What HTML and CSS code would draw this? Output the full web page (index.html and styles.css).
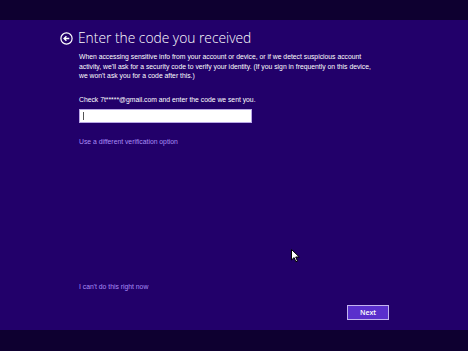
FILE: index.html
```html
<!DOCTYPE html>
<html lang="en">
<head>
    <meta charset="UTF-8">
    <title>Enter the code you received</title>
    <link rel="stylesheet" href="styles.css">
</head>
<body>
    <div class="top-bar"></div>

    <main class="content">
        <div class="heading">
            <svg class="back-icon" width="13" height="13" viewBox="0 0 13 13">
                <circle cx="6.5" cy="6.5" r="5.6" fill="none" stroke="#fff" stroke-width="1.2"/>
                <path d="M9.3 6.5H4.2M6.4 4.2L4 6.5l2.4 2.3" fill="none" stroke="#fff" stroke-width="1.3"/>
            </svg>
            <h1>Enter the code you received</h1>
        </div>

        <div class="body-text">
            <p class="intro">When accessing sensitive info from your account or device, or if we detect suspicious account activity, we'll ask for a security code to verify your identity. (If you sign in frequently on this device, we won't ask you for a code after this.)</p>

            <p class="check">Check 7t*****@gmail.com and enter the code we sent you.</p>
            <div class="code-input"><span class="caret"></span></div>

            <a class="link" href="#">Use a different verification option</a>
        </div>

        <div class="bottom">
            <a class="link" href="#">I can't do this right now</a>
            <div class="actions">
                <button class="next-btn">Next</button>
            </div>
        </div>
    </main>

    <div class="bottom-bar"></div>

    <svg class="pointer" width="10" height="14" viewBox="0 0 10 14">
        <path d="M0.5 0.5V11l2.6-2.4 1.8 4.2 1.6-0.7-1.8-4.1h3.6z" fill="#fff" stroke="#000" stroke-width="1"/>
    </svg>
</body>
</html>
```

FILE: styles.css
```css
body {
    margin: 0;
    width: 468px;
    height: 351px;
    overflow: hidden;
    background-color: #22006a;
    font-family: 'Liberation Sans', Arial, sans-serif;
    color: #fff;
    display: flex;
    flex-direction: column;
}

.top-bar {
    height: 20px;
    background-color: #0e0030;
}

.bottom-bar {
    height: 21px;
    background-color: #0e0030;
}

.content {
    flex: 1;
    display: flex;
    flex-direction: column;
    padding: 9px 79px 0 60px;
}

.heading {
    display: flex;
    align-items: center;
    gap: 5px;
}

.back-icon {
    flex-shrink: 0;
}

h1 {
    margin: 0;
    font-family: 'Open Sans', 'Liberation Sans', sans-serif;
    font-size: 13.8px;
    font-weight: 300;
    line-height: 18px;
}

.body-text {
    padding-left: 19px;
    margin-top: 5px;
}

.intro {
    margin: 0;
    font-size: 6.8px;
    line-height: 9.5px;
    width: 296px;
}

.check {
    margin: 14px 0 0;
    font-size: 6.8px;
    line-height: 10px;
}

.code-input {
    margin-top: 4px;
    width: 168px;
    height: 12px;
    background-color: #fff;
    border: 1px solid #b9a7e6;
    display: flex;
    align-items: center;
    padding-left: 3px;
}

.caret {
    width: 1px;
    height: 8px;
    background-color: #555;
}

.link {
    display: block;
    color: #a98cf6;
    text-decoration: none;
    font-size: 6.8px;
    line-height: 10px;
}

.body-text .link {
    margin-top: 14px;
}

.bottom {
    margin-top: auto;
    padding-left: 19px;
    padding-bottom: 10px;
}

.actions {
    display: flex;
    justify-content: flex-end;
    margin-top: 13px;
}

.next-btn {
    width: 42px;
    height: 15px;
    padding: 0;
    background-color: #5a2fcc;
    border: 1px solid #c4b4ef;
    color: #fff;
    font-family: 'Open Sans', 'Liberation Sans', sans-serif;
    font-size: 7px;
    font-weight: 600;
}

.pointer {
    position: absolute;
    left: 291px;
    top: 249px;
}
```
